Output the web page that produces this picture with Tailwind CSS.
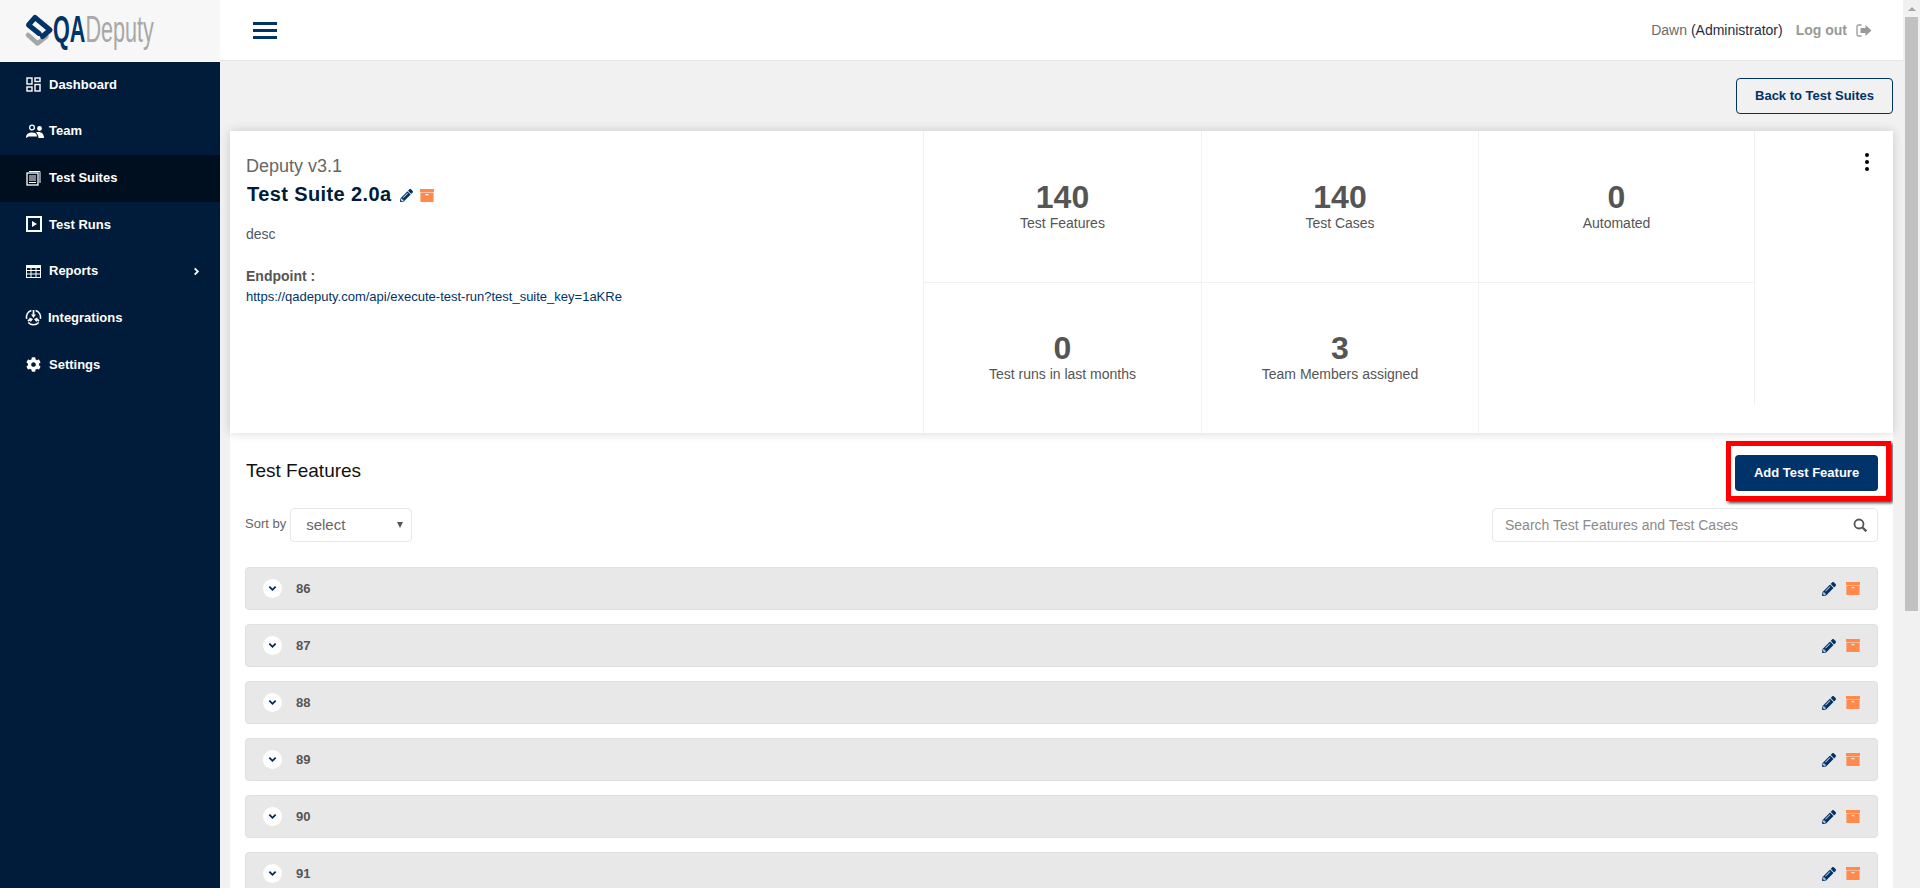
<!DOCTYPE html>
<html lang="en">

<head>
	<meta charset="utf-8" />
	<title>Test Suite 2.0a</title>
	<script src="https://cdn.jsdelivr.net/npm/@tailwindcss/browser@4"></script>
</head>

<body class="h-[888px] overflow-hidden font-['Liberation_Sans',Arial,sans-serif] text-[#555]">
	<svg class="hidden">
		<symbol id="pencil" viewBox="0 0 512 512">
			<path fill="currentColor" fill-rule="evenodd" d="M497.9 142.1l-46.1 46.1c-4.7 4.7-12.3 4.7-17 0l-111-111c-4.7-4.7-4.7-12.3 0-17l46.1-46.1c18.7-18.7 49.1-18.7 67.9 0l60.1 60.1c18.8 18.7 18.8 49.1 0 67.9zM284.2 99.8L21.6 362.4.4 483.9c-2.9 16.4 11.4 30.6 27.8 27.8l121.5-21.3 262.6-262.6c4.7-4.7 4.7-12.3 0-17l-111-111c-4.8-4.7-12.4-4.7-17.1 0zM124.1 339.9c-5.5-5.5-5.5-14.3 0-19.8l154-154c5.5-5.5 14.3-5.5 19.8 0s5.5 14.3 0 19.8l-154 154c-5.5 5.5-14.3 5.5-19.8 0zM88 424h48v36.3l-64.5 11.3-31.1-31.1L51.7 376H88v48z" />
		</symbol>
		<symbol id="archive" viewBox="0 0 14 13">
			<path fill="currentColor" fill-rule="evenodd" d="M0 0h14v3H0zM.4 3.600h13.200V13H.4zM5.600 5v1.200h2.800V5z" />
		</symbol>
		<symbol id="chev" viewBox="0 0 10 10">
			<path fill="none" stroke="currentColor" stroke-width="2" d="M1.5 3l3.500 3.500L8.500 3" />
		</symbol>
	</svg>

	<div class="flex h-[888px]">
		<!-- sidebar -->
		<aside class="w-[220px] shrink-0 bg-[#001c3a] text-white">
			<div class="h-[62px] bg-[#f7f7f7] pl-[24px] pt-[14px] flex items-start">
				<svg class="w-[30px] h-[33px] shrink-0" viewBox="0 0 30 33" fill="none" stroke-linejoin="round" stroke-linecap="round">
					<path stroke="#a6a6a6" stroke-width="4.500" d="M4 21l9.500 8.500 9-7M11 16l8 6" />
					<path stroke="#00336a" stroke-width="5" d="M15 19.500L4.500 11 11 3.500 26 16l-7.500 6.500" />
				</svg>
				<span class="inline-block w-[101px] -ml-[1px] origin-left scale-x-[0.6] whitespace-nowrap text-[36px] leading-[32px]"><span class="font-bold text-[#00336a]">QA</span><span class="text-[#a8a8a8]">Deputy</span></span>
			</div>
			<nav class="text-[13px] font-bold">
				<a class="flex items-center h-[46.7px] pb-[2px] pl-[26px] gap-[8px]">
					<svg class="w-[15px] h-[15px]" viewBox="0 0 15 15" fill="none" stroke="white" stroke-width="1.400"><rect x="1" y="1" width="5" height="6" /><rect x="9" y="1" width="5" height="3.500" /><rect x="1" y="10" width="5" height="4" /><rect x="9" y="7.500" width="5" height="6.500" /></svg>
					Dashboard
				</a>
				<a class="flex items-center h-[46.7px] pb-[2px] pl-[26px] gap-[5px]">
					<svg class="w-[18px] h-[14px]" viewBox="0 0 18 14"><circle cx="6" cy="3.500" r="2.400" fill="none" stroke="white" stroke-width="1.300" /><circle cx="13.500" cy="4.500" r="2.400" fill="white" /><path fill="white" d="M0 14c0-4 2.500-5.500 6-5.500S11 10 11 12.500H2.500zM10 8.500c4-1.500 8 .5 8 5.500h-5.500c0-2-.8-4-2.500-5.500z" /></svg>
					Team
				</a>
				<a class="flex items-center h-[46.7px] pb-[2px] pl-[26px] gap-[8px] bg-[#000f20]">
					<svg class="w-[15px] h-[16px]" viewBox="0 0 15 16" fill="none" stroke="white"><path d="M3 1.500h11V13" /><rect x="1" y="3" width="11" height="12" fill="#000f20" stroke-width="1.300" /><path d="M3 6h7M3 8h7M3 10h7M3 12.500h7" /></svg>
					Test Suites
				</a>
				<a class="flex items-center h-[46.7px] pb-[2px] pl-[26px] gap-[7px]">
					<svg class="w-[16px] h-[16px]" viewBox="0 0 16 16"><rect x="1" y="1" width="14" height="14" fill="none" stroke="white" stroke-width="2" /><path fill="white" d="M6 5l5 3-5 3z" /></svg>
					Test Runs
				</a>
				<a class="flex items-center h-[46.7px] pb-[2px] pl-[26px] pr-[19px] gap-[8px]">
					<svg class="w-[15px] h-[13px]" viewBox="0 0 15 13" fill="none" stroke="white"><rect x=".5" y=".5" width="14" height="12" /><path stroke-width="2" d="M0 2h15" /><path d="M5 2v11M10 2v11M0 5.500h15M0 9h15" /></svg>
					Reports
					<svg class="w-[9px] h-[9px] ml-auto -rotate-90"><use href="#chev" /></svg>
				</a>
				<a class="flex items-center h-[46.7px] pb-[2px] pl-[25px] gap-[6px]">
					<svg class="w-[17px] h-[17px]" viewBox="0 0 17 17" fill="none" stroke="white"><path stroke-width="1.500" d="M6.400 1.500A7 7 0 0 0 1.600 9.800M10.600 1.500a7 7 0 0 1 4.800 8.300M3.300 13.400a7 7 0 0 0 10.400 0" /><path stroke-width="1.700" d="M8.500 1v5M3 12l3-2.500M14 12l-3-2.500" /><path fill="white" stroke="none" d="M6 5.500h5L8.500 9zM4.500 8.500l3.500 1.500-2.500 3.200zM12.500 8.500L9 10l2.500 3.200z" /></svg>
					Integrations
				</a>
				<a class="flex items-center h-[46.7px] pb-[2px] pl-[26px] gap-[8px]">
					<svg class="w-[15px] h-[15px]" viewBox="0 0 512 512"><path fill="white" d="M487.400 315.700l-42.600-24.600c4.300-23.200 4.300-47 0-70.200l42.600-24.600c4.900-2.800 7.100-8.600 5.500-14-11.100-35.600-30-67.800-54.700-94.600-3.800-4.100-10-5.100-14.800-2.300L380.800 110c-17.900-15.400-38.500-27.300-60.800-35.100V25.800c0-5.600-3.900-10.500-9.400-11.700-36.700-8.200-74.300-7.800-109.200 0-5.500 1.200-9.400 6.100-9.400 11.700V75c-22.200 7.900-42.800 19.800-60.800 35.100L88.700 85.500c-4.900-2.800-11-1.900-14.800 2.300-24.700 26.700-43.600 58.900-54.700 94.600-1.700 5.400.6 11.200 5.500 14L67.300 221c-4.300 23.200-4.300 47 0 70.200l-42.600 24.600c-4.900 2.800-7.100 8.600-5.500 14 11.100 35.600 30 67.800 54.700 94.600 3.800 4.100 10 5.100 14.800 2.300l42.600-24.600c17.900 15.400 38.500 27.300 60.800 35.100v49.200c0 5.600 3.900 10.500 9.400 11.700 36.700 8.200 74.300 7.800 109.200 0 5.500-1.200 9.400-6.100 9.400-11.700v-49.200c22.200-7.900 42.800-19.800 60.800-35.100l42.600 24.600c4.900 2.800 11 1.900 14.800-2.300 24.700-26.700 43.600-58.900 54.700-94.600 1.500-5.500-.7-11.300-5.600-14.100zM256 336c-44.100 0-80-35.900-80-80s35.900-80 80-80 80 35.900 80 80-35.900 80-80 80z" /></svg>
					Settings
				</a>
			</nav>
		</aside>

		<!-- main column -->
		<div class="flex-1 min-w-0 flex flex-col bg-[#f1f1f1]">
			<header class="h-[61px] shrink-0 bg-white border-b border-[#e6e6e6] flex items-center pl-[33px] pr-[31px] text-[14px]">
				<div class="w-[24px] h-[17px] flex flex-col justify-between">
					<span class="block h-[3px] bg-[#00336a]"></span>
					<span class="block h-[3px] bg-[#00336a]"></span>
					<span class="block h-[3px] bg-[#00336a]"></span>
				</div>
				<span class="ml-auto text-[#6b6b6b]">Dawn <span class="text-[#1f2d44]">(Administrator)</span></span>
				<span class="ml-[13px] font-bold text-[#999]">Log out</span>
				<svg class="ml-[9px] w-[16px] h-[13px]" viewBox="0 0 16 13"><path fill="none" stroke="#999" stroke-width="1.300" d="M5.500 1H2.500C1.500 1 1 1.500 1 2.500v8c0 1 .5 1.500 1.500 1.500h3" /><path fill="#999" d="M4.500 4h5V1l6 5.500-6 5.500V9h-5z" /></svg>
			</header>

			<main class="flex-1 min-h-0 overflow-hidden pl-[10px] pr-[10px]">
				<div class="h-[70px] flex items-start justify-end pt-[17px]">
					<button class="h-[36px] w-[157px] rounded-[4px] border border-[#00336a] text-[13px] font-bold text-[#00336a]">Back to Test Suites</button>
				</div>

				<!-- suite summary -->
				<section class="relative z-10 h-[302px] bg-white shadow-[0_0_10px_rgba(0,0,0,0.16)] flex">
					<div class="w-[694px] shrink-0 border-r border-[#f1f1f1] pl-[16px] pt-[25px]">
						<p class="text-[18px] leading-[20px] text-[#666]">Deputy v3.1</p>
						<h1 class="mt-[6px] pl-[1px] flex items-center text-[20px] leading-[24px] font-bold tracking-[0.4px] text-[#001c3a]">Test Suite 2.0a
							<svg class="ml-[8px] mt-[3px] w-[13px] h-[13px] text-[#00336a]"><use href="#pencil" /></svg>
							<svg class="ml-[7px] mt-[2px] w-[14px] h-[13px] text-[#ff8a4c]"><use href="#archive" /></svg>
						</h1>
						<p class="mt-[20px] text-[14px] leading-[16px] text-[#4f5666]">desc</p>
						<p class="mt-[26px] text-[14px] leading-[16px] font-bold">Endpoint :</p>
						<p class="mt-[5px] text-[13px] leading-[16px] text-[#00336a]">https://qadeputy.com/api/execute-test-run?test_suite_key=1aKRe</p>
					</div>
					<div class="w-[830px] shrink-0 grid grid-cols-[278px_277px_275px] grid-rows-[152px_150px] text-center text-[14px] leading-[16px]">
						<div class="border-r border-b border-[#f1f1f1] pt-[50px]">
							<p class="text-[32px] leading-[32px] font-bold text-[#555]">140</p>
							<p class="mt-[2px]">Test Features</p>
						</div>
						<div class="border-r border-b border-[#f1f1f1] pt-[50px]">
							<p class="text-[32px] leading-[32px] font-bold text-[#555]">140</p>
							<p class="mt-[2px]">Test Cases</p>
						</div>
						<div class="border-b border-[#f1f1f1] pt-[50px]">
							<p class="text-[32px] leading-[32px] font-bold text-[#555]">0</p>
							<p class="mt-[2px]">Automated</p>
						</div>
						<div class="border-r border-[#f1f1f1] pt-[49px]">
							<p class="text-[32px] leading-[32px] font-bold text-[#555]">0</p>
							<p class="mt-[2px]">Test runs in last months</p>
						</div>
						<div class="border-r border-[#f1f1f1] pt-[49px]">
							<p class="text-[32px] leading-[32px] font-bold text-[#555]">3</p>
							<p class="mt-[2px]">Team Members assigned</p>
						</div>
						<div class="h-[122px]"></div>
					</div>
					<div class="flex-1 border-l border-[#f1f1f1] h-[274px] flex justify-end pr-[24px] pt-[22px]">
						<div class="flex flex-col gap-[3px] w-[4px]">
							<span class="w-[4px] h-[4px] rounded-full bg-black"></span>
							<span class="w-[4px] h-[4px] rounded-full bg-black"></span>
							<span class="w-[4px] h-[4px] rounded-full bg-black"></span>
						</div>
					</div>
				</section>

				<!-- test features -->
				<section class="relative bg-white h-[455px] overflow-hidden px-[15px]">
					<div class="h-[75px] flex items-center justify-between pt-[5px]">
						<h2 class="pl-[1px] mb-[3px] text-[19px] text-[#111]">Test Features</h2>
						<button class="h-[36px] w-[143px] rounded-[4px] bg-[#00336a] text-[13px] font-bold text-white">Add Test Feature</button>
					</div>
					<!-- red callout -->
					<div class="absolute left-[1496px] top-[8px] w-[165px] h-[60px] border-[5px] border-[#ff0000] shadow-[2px_2px_3px_rgba(0,0,0,0.75)]"></div>

					<div class="flex items-center h-[34px]">
						<span class="text-[13px] text-[#666] -mt-[3px]">Sort by</span>
						<div class="relative ml-[4px] w-[122px] h-[34px] rounded-[4px] border border-[#e6e6e6] pl-[15px] flex items-center text-[15px] text-[#666]">select
							<span class="absolute right-[8px] top-[13px] w-0 h-0 border-x-[3px] border-t-[6px] border-x-transparent border-t-[#555]"></span>
						</div>
						<div class="ml-auto w-[386px] h-[34px] rounded-[4px] border border-[#e6e6e6] pl-[12px] pr-[10px] flex items-center justify-between text-[14px] text-[#8a8a8a]">Search Test Features and Test Cases
							<svg class="w-[14px] h-[14px]" viewBox="0 0 14 14" fill="none" stroke="#555" stroke-width="1.800"><circle cx="6" cy="6" r="4.500" /><path stroke-width="2.300" d="M9.500 9.500l3.800 3.800" /></svg>
						</div>
					</div>

					<div class="mt-[25px] flex flex-col gap-[14px]">
						<div class="h-[43px] shrink-0 rounded-[4px] border border-[#e0e0e0] bg-[#e8e8e8] flex items-center pl-[17px] pr-[17px]">
							<span class="w-[19px] h-[19px] rounded-full bg-white text-[#00285a] flex items-center justify-center"><svg class="w-[9px] h-[9px]"><use href="#chev" /></svg></span>
							<span class="ml-[14px] text-[13px] font-bold text-[#555]">86</span>
							<svg class="ml-auto w-[14px] h-[14px] text-[#00336a]"><use href="#pencil" /></svg>
							<svg class="ml-[10px] w-[14px] h-[13px] text-[#ff8a4c]"><use href="#archive" /></svg>
						</div>
						<div class="h-[43px] shrink-0 rounded-[4px] border border-[#e0e0e0] bg-[#e8e8e8] flex items-center pl-[17px] pr-[17px]">
							<span class="w-[19px] h-[19px] rounded-full bg-white text-[#00285a] flex items-center justify-center"><svg class="w-[9px] h-[9px]"><use href="#chev" /></svg></span>
							<span class="ml-[14px] text-[13px] font-bold text-[#555]">87</span>
							<svg class="ml-auto w-[14px] h-[14px] text-[#00336a]"><use href="#pencil" /></svg>
							<svg class="ml-[10px] w-[14px] h-[13px] text-[#ff8a4c]"><use href="#archive" /></svg>
						</div>
						<div class="h-[43px] shrink-0 rounded-[4px] border border-[#e0e0e0] bg-[#e8e8e8] flex items-center pl-[17px] pr-[17px]">
							<span class="w-[19px] h-[19px] rounded-full bg-white text-[#00285a] flex items-center justify-center"><svg class="w-[9px] h-[9px]"><use href="#chev" /></svg></span>
							<span class="ml-[14px] text-[13px] font-bold text-[#555]">88</span>
							<svg class="ml-auto w-[14px] h-[14px] text-[#00336a]"><use href="#pencil" /></svg>
							<svg class="ml-[10px] w-[14px] h-[13px] text-[#ff8a4c]"><use href="#archive" /></svg>
						</div>
						<div class="h-[43px] shrink-0 rounded-[4px] border border-[#e0e0e0] bg-[#e8e8e8] flex items-center pl-[17px] pr-[17px]">
							<span class="w-[19px] h-[19px] rounded-full bg-white text-[#00285a] flex items-center justify-center"><svg class="w-[9px] h-[9px]"><use href="#chev" /></svg></span>
							<span class="ml-[14px] text-[13px] font-bold text-[#555]">89</span>
							<svg class="ml-auto w-[14px] h-[14px] text-[#00336a]"><use href="#pencil" /></svg>
							<svg class="ml-[10px] w-[14px] h-[13px] text-[#ff8a4c]"><use href="#archive" /></svg>
						</div>
						<div class="h-[43px] shrink-0 rounded-[4px] border border-[#e0e0e0] bg-[#e8e8e8] flex items-center pl-[17px] pr-[17px]">
							<span class="w-[19px] h-[19px] rounded-full bg-white text-[#00285a] flex items-center justify-center"><svg class="w-[9px] h-[9px]"><use href="#chev" /></svg></span>
							<span class="ml-[14px] text-[13px] font-bold text-[#555]">90</span>
							<svg class="ml-auto w-[14px] h-[14px] text-[#00336a]"><use href="#pencil" /></svg>
							<svg class="ml-[10px] w-[14px] h-[13px] text-[#ff8a4c]"><use href="#archive" /></svg>
						</div>
						<div class="h-[43px] shrink-0 rounded-[4px] border border-[#e0e0e0] bg-[#e8e8e8] flex items-center pl-[17px] pr-[17px]">
							<span class="w-[19px] h-[19px] rounded-full bg-white text-[#00285a] flex items-center justify-center"><svg class="w-[9px] h-[9px]"><use href="#chev" /></svg></span>
							<span class="ml-[14px] text-[13px] font-bold text-[#555]">91</span>
							<svg class="ml-auto w-[14px] h-[14px] text-[#00336a]"><use href="#pencil" /></svg>
							<svg class="ml-[10px] w-[14px] h-[13px] text-[#ff8a4c]"><use href="#archive" /></svg>
						</div>
					</div>
				</section>
			</main>
		</div>

		<!-- scrollbar, the reference shows the browser's own -->
		<div class="w-[17px] shrink-0 bg-[#f1f1f1] flex flex-col items-center">
			<span class="mt-[7px] w-0 h-0 border-x-[4px] border-b-[4px] border-x-transparent border-b-[#a3a3a3]"></span>
			<span class="mt-[6px] w-[13px] h-[594px] bg-[#c1c1c1]"></span>
		</div>
	</div>
</body>

</html>
